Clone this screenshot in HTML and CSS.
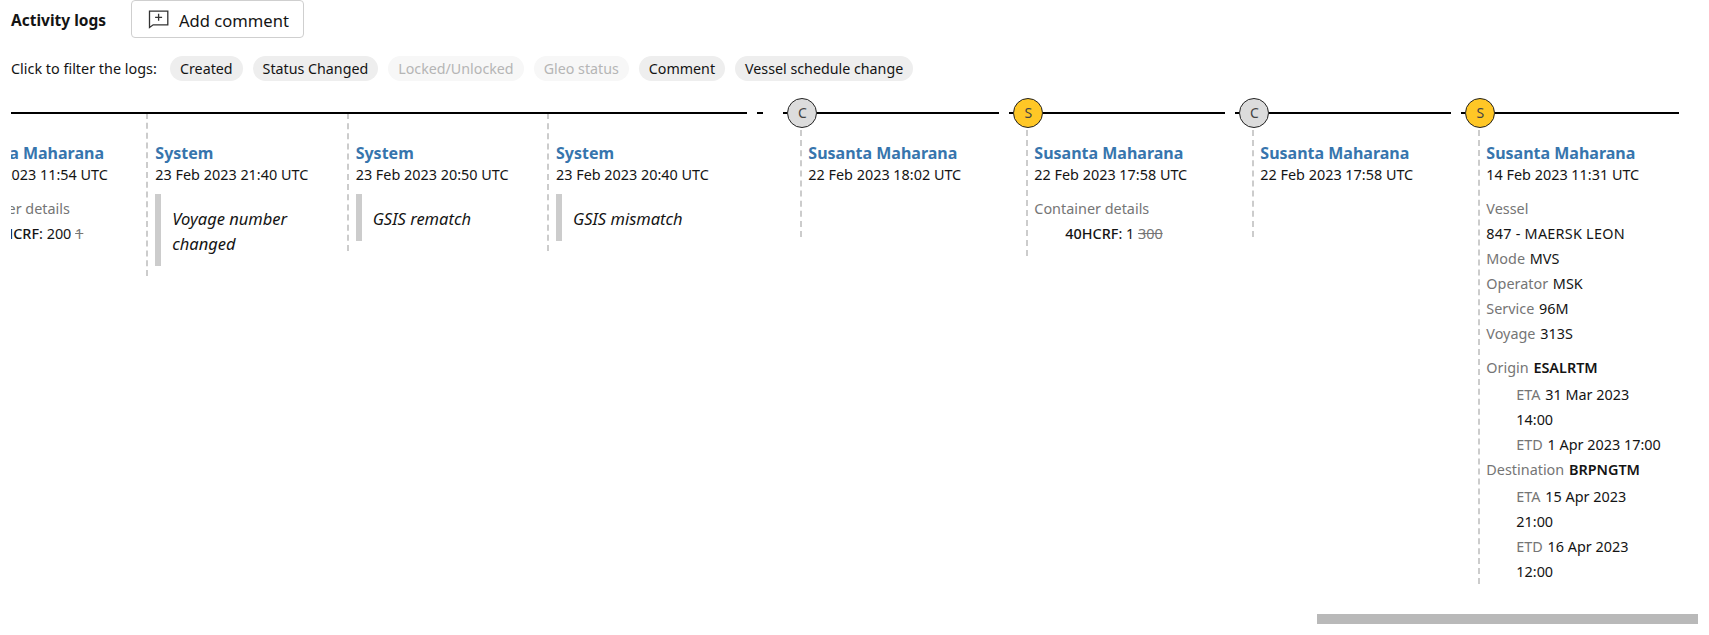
FILE: index.html
```html
<!DOCTYPE html>
<html lang="en">
<head>
<meta charset="utf-8">
<title>Activity logs</title>
<link rel="stylesheet" href="styles.css">
</head>
<body>
<header class="top">
  <h2 class="title">Activity logs</h2>
  <button class="add" type="button">
    <svg class="add-icon" width="21" height="19" viewBox="0 0 21 19" fill="none" stroke="#333" stroke-width="1.3"><path d="M1.5 17.5V1.2h18.3v13.6H5.2z"/><path d="M10.6 3.8v7M7.1 7.3h7"/></svg>
    <span class="add-text">Add comment</span>
  </button>
</header>
<div class="filters">
  <span class="filters-label">Click to filter the logs:</span>
  <span class="pill">Created</span>
  <span class="pill">Status Changed</span>
  <span class="pill pill-off">Locked/Unlocked</span>
  <span class="pill pill-off">Gleo status</span>
  <span class="pill">Comment</span>
  <span class="pill">Vessel schedule change</span>
</div>
<div class="viewport">
  <div class="timeline">
    <article class="entry entry-sys">
      <div class="rail"><i class="line"></i></div>
      <div class="body body-sys">
        <a class="name">Susanta Maharana</a>
        <div class="date">23 Feb 2023 11:54 UTC</div>
        <div class="details">
          <div class="label">Container details</div>
          <div class="container-row"><b class="code">40HCRF</b>: 200 <s class="old">1</s></div>
        </div>
      </div>
    </article>
    <article class="entry entry-sys">
      <div class="rail"><i class="line"></i></div>
      <div class="body body-sys">
        <a class="name">System</a>
        <div class="date">23 Feb 2023 21:40 UTC</div>
        <blockquote class="quote">Voyage number changed</blockquote>
      </div>
    </article>
    <article class="entry entry-sys">
      <div class="rail"><i class="line"></i></div>
      <div class="body body-sys">
        <a class="name">System</a>
        <div class="date">23 Feb 2023 20:50 UTC</div>
        <blockquote class="quote">GSIS rematch</blockquote>
      </div>
    </article>
    <article class="entry entry-sys">
      <div class="rail"><i class="line"></i></div>
      <div class="body body-sys">
        <a class="name">System</a>
        <div class="date">23 Feb 2023 20:40 UTC</div>
        <blockquote class="quote">GSIS mismatch</blockquote>
      </div>
    </article>
    <div class="sep"><i class="dash"></i></div>
    <article class="entry">
      <div class="rail"><i class="stub"></i><span class="dot dot-c">C</span><i class="line"></i></div>
      <div class="body body-empty">
        <a class="name">Susanta Maharana</a>
        <div class="date">22 Feb 2023 18:02 UTC</div>
      </div>
    </article>
    <article class="entry">
      <div class="rail"><i class="stub"></i><span class="dot dot-s">S</span><i class="line"></i></div>
      <div class="body">
        <a class="name">Susanta Maharana</a>
        <div class="date">22 Feb 2023 17:58 UTC</div>
        <div class="details">
          <div class="label">Container details</div>
          <div class="container-row"><b class="code">40HCRF</b>: 1 <s class="old">300</s></div>
        </div>
      </div>
    </article>
    <article class="entry">
      <div class="rail"><i class="stub"></i><span class="dot dot-c">C</span><i class="line"></i></div>
      <div class="body body-empty">
        <a class="name">Susanta Maharana</a>
        <div class="date">22 Feb 2023 17:58 UTC</div>
      </div>
    </article>
    <article class="entry">
      <div class="rail"><i class="stub"></i><span class="dot dot-s">S</span><i class="line"></i></div>
      <div class="body body-last">
        <a class="name">Susanta Maharana</a>
        <div class="date">14 Feb 2023 11:31 UTC</div>
        <div class="details">
          <div class="label">Vessel</div>
          <div class="vessel-name">847 - MAERSK LEON</div>
          <div><span class="label">Mode</span> MVS</div>
          <div><span class="label">Operator</span> MSK</div>
          <div><span class="label">Service</span> 96M</div>
          <div><span class="label">Voyage</span> 313S</div>
          <div class="port"><span class="label">Origin</span> <b class="port-code">ESALRTM</b></div>
          <div class="times">
            <div><span class="label">ETA</span> 31 Mar 2023 14:00</div>
            <div><span class="label">ETD</span> 1 Apr 2023 17:00</div>
          </div>
          <div><span class="label">Destination</span> <b class="port-code">BRPNGTM</b></div>
          <div class="times">
            <div><span class="label">ETA</span> 15 Apr 2023 21:00</div>
            <div><span class="label">ETD</span> 16 Apr 2023 12:00</div>
          </div>
        </div>
      </div>
    </article>
  </div>
</div>
<div class="scroll-track"><div class="scroll-thumb"></div></div>
</body>
</html>
```
FILE: styles.css
```css
* { box-sizing: border-box; }
html, body { margin: 0; height: 635px; overflow: hidden; }
body {
  padding-left: 11px;
  font-family: "Noto Sans", sans-serif;
  font-size: 14.4px;
  color: #141414;
  background: #fff;
}
.top { display: flex; align-items: center; height: 38px; }
.title {
  margin: 2px 25px 0 0;
  width: 95px;
  font-size: 15.5px;
  font-weight: 700;
  white-space: nowrap;
}
.add {
  display: flex;
  align-items: center;
  width: 173px;
  height: 38px;
  padding: 1px 0 0 16px;
  gap: 10px;
  border: 1px solid #cfcfcf;
  border-radius: 4px;
  background: #fff;
  font: inherit;
  font-size: 16.6px;
  color: #141414;
}
.add-icon { flex: none; }
.add-text { padding-top: 1px; }
.filters { display: flex; align-items: center; gap: 10px; height: 25px; margin-top: 18px; }
.filters-label { width: 149px; white-space: nowrap; }
.pill {
  height: 25px;
  padding: 0 10px;
  border-radius: 13px;
  background: #eee;
  font-size: 14.25px;
  line-height: 25px;
  white-space: nowrap;
}
.pill-off { background: #f7f7f7; color: #b5b5b5; }
.viewport { width: 1669px; margin-top: 17px; overflow: hidden; }
.timeline { display: flex; align-items: flex-start; margin-left: -65px; width: 2000px; }
.entry { flex: none; width: 226px; }
.entry-sys { width: 200.33px; }
.rail { display: flex; align-items: center; height: 30px; }
.line { flex: 1; height: 2px; background: #000; margin-right: 10px; }
.entry-sys .line { margin-right: 0; }
.entry:last-child .line { margin-right: 8px; }
.stub { width: 4px; height: 2px; background: #000; }
.dot {
  flex: none;
  width: 30px;
  height: 30px;
  border: 1px solid #222;
  border-radius: 50%;
  text-align: center;
  line-height: 28px;
  font-size: 14px;
  color: #444;
}
.dot-c { background: #dcdcdc; }
.dot-s { background: #ffc726; }
.sep { flex: none; width: 36px; height: 30px; display: flex; align-items: center; padding-left: 10px; }
.dash { width: 6px; height: 2px; background: #000; }
.body {
  margin-left: 17px;
  margin-top: 2px;
  padding: 12px 0 10px 6px;
  border-left: 2px dashed #ccc;
}
.body-sys { margin: -15px 0 0; padding: 29px 0 10px 7px; }
.body-empty { padding-bottom: 51px; }
.body-last { padding-bottom: 0; }
.name {
  display: block;
  height: 22px;
  color: #3775ad;
  font-size: 16px;
  font-weight: 700;
  line-height: 22px;
  white-space: nowrap;
}
.date { height: 22px; line-height: 22px; white-space: nowrap; }
.details { margin-top: 10px; line-height: 25px; }
.label { color: #757575; margin-right: 1px; }
.vessel-name { letter-spacing: 0.25px; white-space: nowrap; }
.container-row { padding-left: 31px; white-space: nowrap; overflow: hidden; }
.code { font-weight: 500; }
.port-code { font-weight: 600; }
.old { color: #757575; }
.quote {
  margin: 8px 0 0;
  padding: 12px 20px 10px 11px;
  border-left: 6px solid #ccc;
  font-size: 16.5px;
  font-style: italic;
  line-height: 25px;
}
.port { margin-top: 9px; }
.times { margin-top: 2px; padding-left: 30px; width: 178px; }
.scroll-track { display: flex; justify-content: flex-end; width: 1687px; height: 10px; margin-top: 30px; }
.scroll-thumb { width: 381px; height: 10px; background: #b9b9b9; }
```
